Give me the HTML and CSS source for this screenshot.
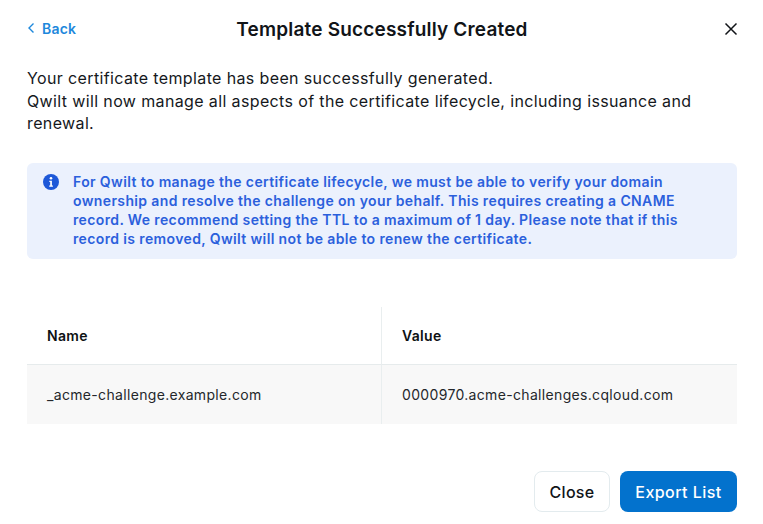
FILE: index.html
```html
<!DOCTYPE html>
<html lang="en">
<head>
<meta charset="utf-8">
<title>Template Successfully Created</title>
<link rel="stylesheet" href="styles.css">
</head>
<body>
<main class="dialog">
  <header class="head">
    <a class="back" href="#">
      <svg class="back-icon" width="8" height="12" viewBox="0 0 8 12"><path d="M6.500 1.500 2 6l4.500 4.500" fill="none" stroke="currentColor" stroke-width="1.400"/></svg>
      <span>Back</span>
    </a>
    <h1 class="title">Template Successfully Created</h1>
    <button class="x" aria-label="Close">
      <svg width="14" height="14" viewBox="0 0 14 14"><path d="M1.500 1.500l11 11M12.500 1.500l-11 11" fill="none" stroke="currentColor" stroke-width="1.500"/></svg>
    </button>
  </header>
  <p class="intro">Your certificate template has been successfully generated.<br>Qwilt will now manage all aspects of the certificate lifecycle, including issuance and renewal.</p>
  <section class="notice">
    <svg class="info" width="16" height="16" viewBox="0 0 16 16"><circle cx="8" cy="8" r="8" fill="#1d58d8"/><circle cx="8" cy="4.300" r="1.300" fill="#fff"/><path d="M6.300 6.700h2.600v4.700h1v1.300H6.200v-1.300h1v-3.400h-.9z" fill="#fff"/></svg>
    <p class="notice-text">For Qwilt to manage the certificate lifecycle, we must be able to verify your domain ownership and resolve the challenge on your behalf. This requires creating a CNAME record. We recommend setting the TTL to a maximum of 1 day. Please note that if this record is removed, Qwilt will not be able to renew the certificate.</p>
  </section>
  <section class="table">
    <div class="cell th">Name</div>
    <div class="cell th">Value</div>
    <div class="cell td">_acme-challenge.example.com</div>
    <div class="cell td">0000970.acme-challenges.cqloud.com</div>
  </section>
  <footer class="actions">
    <button class="btn secondary">Close</button>
    <button class="btn primary">Export List</button>
  </footer>
</main>
</body>
</html>
```
FILE: styles.css
```css
* { box-sizing: border-box; }
html, body { margin: 0; height: 100%; background: #fff; }
body { font-family: "Inter", "Liberation Sans", sans-serif; color: #111418; }
.dialog { width: 763px; height: 524px; padding: 16px 26px 12px 27px; display: flex; flex-direction: column; }
.head { display: grid; grid-template-columns: 1fr auto 1fr; align-items: center; height: 27px; }
.back { display: flex; align-items: center; gap: 7px; color: #1e88dc; font-size: 14px; font-weight: 600; text-decoration: none; letter-spacing: .2px; margin-top: -3px; }
.title { margin: 0; font-size: 19px; line-height: 27px; font-weight: 600; letter-spacing: .18px; }
.x { justify-self: end; border: 0; background: none; padding: 0; color: #111418; width: 14px; height: 14px; display: flex; margin-right: -1px; margin-top: -2px; }
.intro { margin: 24px 0 0; font-size: 16px; line-height: 22.500px; letter-spacing: .37px; color: #15181c; }
.notice { margin-top: 28px; height: 96px; background: #ebf1fd; border-radius: 6px; padding: 11px 40px 11px 16px; display: flex; gap: 14px; }
.info { flex: none; }
.notice-text { margin: -2px 0 0; font-size: 14px; line-height: 19px; font-weight: 600; letter-spacing: .37px; color: #2b60dc; }
.table { margin-top: 48px; display: grid; grid-template-columns: 354px 1fr; }
.cell { display: flex; align-items: center; padding-left: 20px; font-size: 14px; letter-spacing: .33px; }
.th { height: 58px; font-weight: 600; border-bottom: 1px solid #e6ebec; color: #0e1114; }
.cell:nth-child(even) { border-left: 1px solid #e9eeef; }
.td { height: 59px; padding-top: 1px; background: #f8f8f8; color: #24272b; }
.actions { margin-top: auto; display: flex; justify-content: flex-end; gap: 10px; }
.btn { height: 41px; border-radius: 8px; font-family: inherit; font-size: 16px; font-weight: 500; }
.secondary { width: 76px; background: #fff; border: 1px solid #e3ebee; color: #111418; letter-spacing: .3px; }
.primary { width: 117px; background: #0372cd; border: 0; color: #fff; letter-spacing: .45px; }
```
